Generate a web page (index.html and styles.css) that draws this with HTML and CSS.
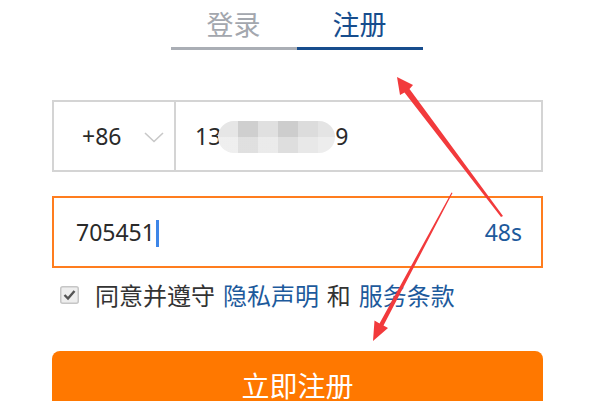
FILE: index.html
```html
<!DOCTYPE html>
<html lang="zh">
<head>
<meta charset="utf-8">
<link rel="stylesheet" href="styles.css">
</head>
<body>
<div class="page">
  <div class="tabs">
    <div class="tab">登录</div>
    <div class="tab active">注册</div>
  </div>

  <div class="field phone">
    <div class="cc">
      <span class="cc-num">+86</span>
      <svg class="chev" width="20" height="11" viewBox="0 0 20 11"><path d="M1 1 L10 9.5 L19 1" fill="none" stroke="#c8c8c8" stroke-width="1.6"/></svg>
    </div>
    <div class="num">
      <span class="num-text">13</span><span class="gap-digits"></span><span class="num-text">9</span>
      <span class="blur"></span>
    </div>
  </div>

  <div class="field code">
    <span class="code-text">705451</span><span class="caret"></span>
    <span class="timer">48s</span>
  </div>

  <div class="agree">
    <svg class="check" width="19" height="18" viewBox="0 0 19 18">
      <rect x="0.75" y="0.75" width="17.5" height="16.5" rx="2" fill="#eeeeee" stroke="#c6c6c6" stroke-width="1.5"/>
      <path d="M4.5 9 L8 12.5 L14.5 5" fill="none" stroke="#555" stroke-width="2.4"/>
    </svg>
    <span class="agree-text">同意并遵守 <span class="link">隐私声明</span> 和 <span class="link">服务条款</span></span>
  </div>

  <div class="submit">立即注册</div>

  <svg class="marks" width="602" height="401" viewBox="0 0 602 401">
    <polygon fill="#f23a3c" points="397,77 413,85 409.5,89 503,216 501,217 404.5,92.5 400,95"/>
    <polygon fill="#f23a3c" points="373,341 388,328 383.5,325.5 452.5,193 451.5,192.5 379.5,323.5 374.5,320.5"/>
  </svg>
</div>
</body>
</html>
```

FILE: styles.css
```css
html, body {
  margin: 0;
  padding: 0;
  background: #ffffff;
}
body {
  width: 602px;
  height: 401px;
  overflow: hidden;
  font-family: "Noto Sans", "Noto Sans CJK SC", sans-serif;
  color: #333333;
}
.page {
  position: relative;
  width: 602px;
  height: 401px;
  padding: 0 59px 0 52px;
  box-sizing: border-box;
}
.tabs {
  display: flex;
  justify-content: center;
  margin-left: -2px;
}
.tab {
  width: 126px;
  height: 46px;
  line-height: 46px;
  padding-top: 1px;
  box-sizing: content-box;
  text-align: center;
  font-size: 27px;
  font-family: "Noto Sans CJK SC", sans-serif;
  color: #a3a7ae;
  border-bottom: 3px solid #aaaeb5;
}
.tab.active {
  color: #174d8d;
  border-bottom-color: #174d8d;
}
.field {
  display: flex;
  align-items: center;
  height: 72px;
  box-sizing: border-box;
}
.phone {
  margin-top: 50px;
  border: 2px solid #d4d4d4;
}
.cc {
  width: 122px;
  height: 100%;
  display: flex;
  align-items: center;
  border-right: 2px solid #d4d4d4;
  padding-left: 28px;
  box-sizing: border-box;
}
.cc-num {
  font-size: 23px;
  color: #2a2a2a;
}
.chev {
  margin-left: 23px;
  margin-top: 2px;
}
.num {
  position: relative;
  display: flex;
  align-items: center;
  padding-left: 19px;
  height: 100%;
}
.num-text {
  font-size: 23px;
  color: #2a2a2a;
}
.gap-digits {
  display: inline-block;
  width: 114px;
}
.blur {
  position: absolute;
  left: 42px;
  top: 19px;
  width: 117px;
  height: 32px;
  border-radius: 16px;
  background:
    linear-gradient(to bottom, rgba(255,255,255,0) 0, rgba(255,255,255,0) 50%, rgba(255,255,255,0.35) 50%, rgba(255,255,255,0.35) 100%),
    linear-gradient(to right, #e6e6e6 0, #e6e6e6 20px, #cfcfcf 20px, #cfcfcf 40px, #e0e0e0 40px, #e0e0e0 60px, #cdcdcd 60px, #cdcdcd 80px, #dcdcdc 80px, #dcdcdc 100px, #e4e4e4 100px);
}
.code {
  margin-top: 24px;
  border: 2px solid #ff7d1e;
  padding: 0 19px 0 22px;
}
.code-text {
  font-size: 23px;
  color: #2a2a2a;
}
.caret {
  display: inline-block;
  width: 3px;
  height: 27px;
  background: #3d86e8;
  margin-left: 1px;
  margin-top: 2px;
}
.timer {
  margin-left: auto;
  font-size: 23px;
  color: #1d5a9c;
}
.agree {
  display: flex;
  align-items: center;
  height: 52px;
  padding-left: 8px;
}
.check {
  margin-top: 1px;
}
.agree-text {
  margin-left: 16px;
  font-size: 24px;
  word-spacing: 2.5px;
  font-family: "Noto Sans CJK SC", sans-serif;
  color: #333333;
}
.link {
  color: #1d5a9c;
}
.submit {
  margin-top: 31px;
  height: 72px;
  line-height: 68px;
  border-radius: 8px;
  background: #ff7800;
  color: #ffffff;
  text-align: center;
  font-size: 28px;
  font-family: "Noto Sans CJK SC", sans-serif;
}
.marks {
  position: absolute;
  left: 0;
  top: 0;
  pointer-events: none;
}
```
